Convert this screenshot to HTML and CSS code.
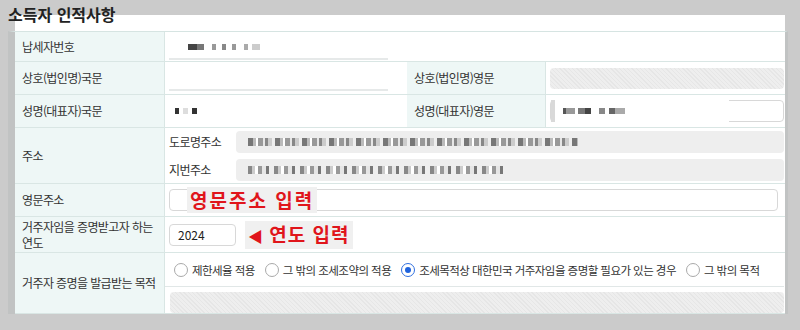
FILE: index.html
```html
<!DOCTYPE html>
<html lang="ko">
<head>
  <meta charset="UTF-8" />
  <title>소득자 인적사항</title>
  <link rel="stylesheet" href="styles.css">
</head>
<body>
  <h2 class="title">소득자 인적사항</h2>

  <div class="panel">
    <div class="sheet">
      <!-- 납세자번호 -->
      <div class="th">납세자번호</div>
      <div class="td span3">
        <div class="field masked"><span class="mosaic m1"></span></div>
      </div>

      <!-- 상호 -->
      <div class="th">상호(법인명)국문</div>
      <div class="td">
        <div class="field masked"></div>
      </div>
      <div class="th">상호(법인명)영문</div>
      <div class="td">
        <div class="field disabled"></div>
      </div>

      <!-- 성명 -->
      <div class="th">성명(대표자)국문</div>
      <div class="td">
        <div class="field plain"><span class="mosaic m2"></span></div>
      </div>
      <div class="th">성명(대표자)영문</div>
      <div class="td">
        <div class="field input-box"><span class="cover"><span class="mosaic m3"></span></span></div>
      </div>

      <!-- 주소 -->
      <div class="th">주소</div>
      <div class="td span3 addr">
        <div class="addr-row">
          <span class="sub">도로명주소</span>
          <div class="field grey"><span class="mosaic m4"></span></div>
        </div>
        <div class="addr-row">
          <span class="sub">지번주소</span>
          <div class="field grey"><span class="mosaic m5"></span></div>
        </div>
      </div>

      <!-- 영문주소 -->
      <div class="th">영문주소</div>
      <div class="td span3 note-cell">
        <div class="field input-box eng"></div>
        <span class="note note-eng">영문주소 입력</span>
      </div>

      <!-- 연도 -->
      <div class="th">거주자임을 증명받고자 하는 연도</div>
      <div class="td span3 year-cell">
        <div class="field input-box year">2024</div>
        <span class="note note-year"><span class="arrow">◀</span> 연도 입력</span>
      </div>

      <!-- 목적 -->
      <div class="th">거주자 증명을 발급받는 목적</div>
      <div class="td span3 purpose">
        <div class="radios">
          <label class="radio"><span class="dot"></span>제한세율 적용</label>
          <label class="radio"><span class="dot"></span>그 밖의 조세조약의 적용</label>
          <label class="radio on"><span class="dot"></span>조세목적상 대한민국 거주자임을 증명할 필요가 있는 경우</label>
          <label class="radio"><span class="dot"></span>그 밖의 목적</label>
        </div>
        <div class="field disabled wide"></div>
      </div>
    </div>
  </div>
</body>
</html>
```

FILE: styles.css
```css
body {
  margin: 0;
  background: #cbcbcb;
  font-family: "Noto Sans CJK KR", "Noto Sans", sans-serif;
  color: #333;
}
.title {
  position: relative;
  z-index: 1;
  margin: 0;
  padding: 4px 8px 0;
  height: 11px;
  line-height: 20px;
  font-size: 16px;
  font-weight: bold;
  color: #222;
}
.panel {
  margin: 0 15px;
  height: 299px;
  padding-top: 16px;
  box-sizing: border-box;
  background: #fff;
}
.sheet {
  display: grid;
  grid-template-columns: 150px 242px 139px 239px;
  grid-template-rows: 30px 33px 33px 56px 33px 36px 61px;
  margin: 0 -3px 0 -7px;
  border-top: 1px solid #d6e4e2;
  border-left: 7px solid #c1c3c3;
  border-right: 3px solid #c1c3c3;
  border-bottom: 3px solid #c1c3c3;
}
.th, .td {
  box-sizing: border-box;
  border-bottom: 1px solid #d9e6e4;
  display: flex;
  align-items: center;
}
.th {
  background: #eef7f6;
  border-right: 1px solid #d9e6e4;
  padding: 0 6px 0 7px;
  font-size: 12px;
  line-height: 16px;
  letter-spacing: -0.6px;
  color: #333;
}
.td {
  background: #fff;
  padding: 0 1px 0 4px;
}
.span3 {
  grid-column: span 3;
}

.field {
  box-sizing: border-box;
  height: 22px;
  width: 100%;
  display: flex;
  align-items: center;
  border-radius: 4px;
  font-size: 12px;
}
.masked {
  width: 219px;
  margin-top: 2px;
  height: 24px;
  border-bottom: 2px solid #e6e9e9;
  border-radius: 0;
  padding-left: 9px;
}
.plain {
  padding-left: 6px;
}
.disabled {
  height: 21px;
  background: repeating-linear-gradient(45deg, #e6e6e6 0 1px, #eeeeee 1px 3px);
}
.input-box {
  background: #fff;
  border: 1px solid #d8d8d8;
  padding-left: 8px;
}
.cover {
  display: flex;
  align-items: center;
  height: 22px;
  width: 166px;
  margin: 0 0 0 -8px;
  padding-left: 8px;
  border-left: 4px solid #d9d9d9;
  background: #fff;
}
.grey {
  background: #eeeeee;
  padding-left: 12px;
}

.mosaic {
  display: inline-block;
  height: 6px;
  filter: blur(0.6px);
}
.m1 {
  width: 82px;
  background: linear-gradient(90deg, #fff 0 10px, #444 10px 19px, #777 19px 26px, #fff 26px 34px, #999 34px 38px, #fff 38px 44px, #888 44px 48px, #fff 48px 54px, #999 54px 58px, #fff 58px 66px, #aaa 66px 70px, #fff 70px 74px, #ccc 74px 82px);
}
.m2 {
  width: 30px;
  background: linear-gradient(90deg, #333 0 4px, #fff 4px 8px, #ddd 8px 13px, #fff 13px 17px, #333 17px 22px, #fff 22px 30px);
}
.m3 {
  width: 62px;
  background: linear-gradient(90deg, #555 0 3px, #999 3px 12px, #fff 12px 15px, #777 15px 22px, #444 22px 28px, #fff 28px 36px, #888 36px 42px, #fff 42px 46px, #666 46px 52px, #aaa 52px 56px);
}
.m4 {
  width: 330px;
  height: 8px;
  background: repeating-linear-gradient(90deg, #777 0 5px, #bbb 5px 8px, #fff 8px 10px, #999 10px 15px, #e6e6e6 15px 17px, #888 17px 20px, #ccc 20px 24px, #eee 24px 27px);
}
.m5 {
  width: 255px;
  height: 8px;
  background: repeating-linear-gradient(90deg, #888 0 4px, #ccc 4px 7px, #fff 7px 10px, #999 10px 14px, #e6e6e6 14px 18px, #777 18px 21px, #eee 21px 26px);
}

.addr {
  flex-direction: column;
  align-items: stretch;
  justify-content: center;
  gap: 6px;
}
.addr-row {
  display: flex;
  align-items: center;
}
.sub {
  width: 67px;
  flex: none;
  font-size: 12px;
  letter-spacing: -0.6px;
  color: #333;
}
.addr-row .field {
  flex: 1;
}

.note-cell, .year-cell {
  position: relative;
}
.eng {
  width: 609px;
}
.note {
  position: absolute;
  top: 3px;
  padding: 0 3px;
  background: #f0f0f0;
  color: #e0151b;
  font-size: 19px;
  font-weight: bold;
  line-height: 26px;
  letter-spacing: 2px;
}
.note-eng {
  left: 22px;
}
.year {
  width: 67px;
  padding-left: 8px;
  color: #222;
}
.note-year {
  left: 80px;
  top: 4px;
  letter-spacing: 1px;
}
.arrow {
  font-size: 15px;
  letter-spacing: 0;
}

.purpose {
  flex-direction: column;
  align-items: stretch;
  padding: 0 1px 0 0;
}
.radios {
  height: 34px;
  box-sizing: border-box;
  border-bottom: 1px solid #e1e7e7;
  display: flex;
  align-items: center;
  padding-left: 9px;
  gap: 0 10px;
}
.radio {
  display: flex;
  align-items: center;
  font-size: 11.5px;
  letter-spacing: -0.55px;
  color: #333;
}
.dot {
  width: 14px;
  height: 14px;
  box-sizing: border-box;
  border: 1px solid #a9a9a9;
  border-radius: 50%;
  background: #fff;
  margin-right: 4px;
  position: relative;
}
.radio.on .dot {
  border-color: #2f6fe0;
}
.radio.on .dot::after {
  content: "";
  position: absolute;
  left: 3px;
  top: 3px;
  width: 6px;
  height: 6px;
  border-radius: 50%;
  background: #1f63dd;
}
.wide {
  margin: 5px 0 0 5px;
  width: auto;
}
```
